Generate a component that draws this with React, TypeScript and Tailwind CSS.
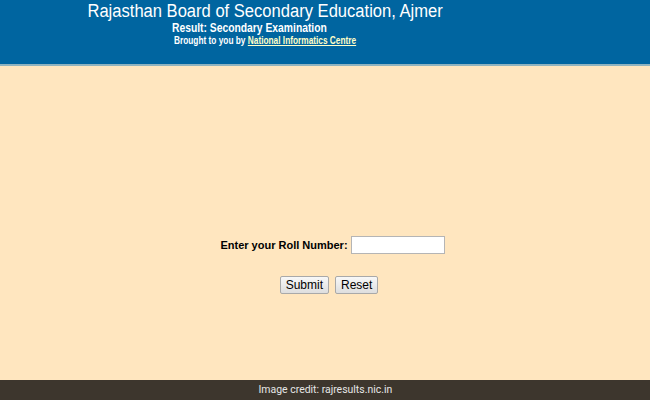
export default function App() {
  return (
    <div className="w-[650px] h-[400px] flex flex-col bg-[#ffe6bf] overflow-hidden" style={{ fontFamily: '"Liberation Sans", Arial, sans-serif' }}>
      <div className="h-[64px] bg-[#0065a0] text-white flex flex-col">
        <div className="w-[530px] flex justify-center mt-[1px]">
          <div className="text-[18px] leading-[20px] whitespace-nowrap scale-x-[0.92]">Rajasthan Board of Secondary Education, Ajmer</div>
        </div>
        <div className="ml-[172px] text-[12px] leading-[14px] font-bold whitespace-nowrap origin-left scale-x-[0.86]">Result: Secondary Examination</div>
        <div className="ml-[174px] text-[10px] leading-[12px] font-bold whitespace-nowrap origin-left scale-x-[0.83]">
          Brought to you by <span className="underline text-[#ffffc8]">National Informatics Centre</span>
        </div>
      </div>
      <div className="h-[2px] bg-[#8fb3bf]" />
      <div className="flex-1 flex flex-col items-center">
        <div className="mt-[170px] flex items-center gap-[3px] ml-[15px]">
          <span className="text-[11px] font-bold text-black">Enter your Roll Number:</span>
          <input className="w-[94px] h-[18px] bg-white border border-[#b5b5b5] outline-none" />
        </div>
        <div className="mt-[22px] flex gap-[6px] ml-[8px]">
          <button className="h-[18px] px-[5px] text-[12px] text-black border border-[#a9a9a9] rounded-[2px] bg-gradient-to-b from-[#f8f8f8] to-[#dedede] leading-[16px]">Submit</button>
          <button className="h-[18px] px-[5px] text-[12px] text-black border border-[#a9a9a9] rounded-[2px] bg-gradient-to-b from-[#f8f8f8] to-[#dedede] leading-[16px]">Reset</button>
        </div>
      </div>
      <div className="h-[20px] bg-[#3d362d] flex items-center justify-center text-[#e6e6e6]" style={{ fontFamily: 'Roboto, sans-serif' }}>
        <span className="text-[11px] whitespace-nowrap scale-x-[0.95]">Image credit: rajresults.nic.in</span>
      </div>
    </div>
  );
}
